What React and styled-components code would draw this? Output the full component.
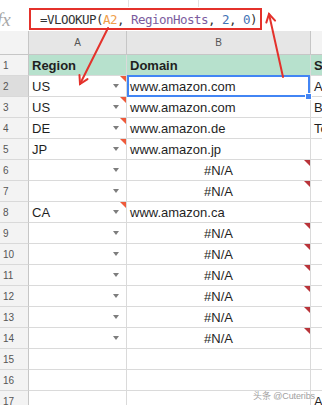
import React from "react";
import styled, { createGlobalStyle } from "styled-components";

const GlobalStyle = createGlobalStyle`
  html, body { margin: 0; padding: 0; background: #fff; overflow: hidden; }
  body { font-family: "Liberation Sans", Arial, sans-serif; }
`;

const COLS = "29px 98px 184px 1fr";
const RED = "#e4312b";

const Page = styled.div`
  position: relative;
  width: 322px;
  height: 405px;
  overflow: hidden;
  background: #fff;
`;

const TopStrip = styled.div`
  display: flex;
  height: 7px;
`;

const ToolbarSlot = styled.div`
  box-sizing: border-box;
  width: ${(p) => p.$w}px;
  height: 100%;
  border-right: 1px solid #e3e3e3;
`;

const FormulaBar = styled.div`
  display: flex;
  align-items: center;
  height: 24px;
  box-sizing: border-box;
`;

const FxLabel = styled.div`
  width: 29px;
  flex: none;
  margin-left: -3px;
  font-family: "Liberation Serif", serif;
  font-style: italic;
  font-size: 19px;
  color: #a8a8a8;
  line-height: 1;
`;

const FormulaBox = styled.div`
  box-sizing: border-box;
  width: 233px;
  height: 22px;
  margin-left: 3px;
  border: 2px solid ${RED};
  padding-left: 9px;
  display: flex;
  align-items: center;
  font-family: "DejaVu Sans Mono", "Liberation Mono", monospace;
  font-size: 12.5px;
  letter-spacing: -0.53px;
  color: #333;
  white-space: pre;
`;

const Tok = styled.span`
  color: ${(p) => p.$c};
`;

const HeaderRow = styled.div`
  display: grid;
  grid-template-columns: ${COLS};
  height: 24px;
`;

const ColHead = styled.div`
  box-sizing: border-box;
  background: ${(p) => p.$bg};
  border-right: ${(p) => (p.$last ? "none" : "1px solid #c6c6c6")};
  border-bottom: 1px solid #c6c6c6;
  display: flex;
  align-items: center;
  justify-content: center;
  font-size: 10px;
  color: #555;
`;

const Row = styled.div`
  display: grid;
  grid-template-columns: ${COLS};
  height: 21px;
`;

const RowHead = styled.div`
  box-sizing: border-box;
  background: ${(p) => (p.$sel ? "#dddddd" : "#f3f3f3")};
  border-right: 1px solid #c6c6c6;
  border-bottom: 1px solid #d9d9d9;
  padding-left: 3px;
  display: flex;
  align-items: center;
  font-size: 10px;
  color: #555;
`;

const Cell = styled.div`
  position: relative;
  box-sizing: border-box;
  background: ${(p) => (p.$head ? "#b7e1cd" : "#fff")};
  border-right: ${(p) => (p.$last ? "none" : "1px solid #dadada")};
  border-bottom: 1px solid #dadada;
  padding: 0 3px;
  display: flex;
  align-items: center;
  justify-content: ${(p) => p.$justify || "flex-start"};
  font-size: 13px;
  font-weight: ${(p) => (p.$head ? 700 : 400)};
  color: #1f1f1f;
  white-space: nowrap;
  overflow: ${(p) => (p.$active ? "visible" : "hidden")};

  ${(p) =>
    p.$active &&
    `
    z-index: 2;
    &::after {
      content: "";
      position: absolute;
      top: -1px;
      left: 0;
      right: 0;
      bottom: -1px;
      border: 2px solid #4285f4;
      pointer-events: none;
    }
  `}
`;

const Handle = styled.span`
  position: absolute;
  right: -2px;
  bottom: -4px;
  width: 5px;
  height: 5px;
  background: #4285f4;
  border: 1px solid #fff;
  z-index: 3;
`;

const DropArrow = styled.span`
  width: 0;
  height: 0;
  margin-right: 4px;
  border-left: 3.5px solid transparent;
  border-right: 3.5px solid transparent;
  border-top: 4px solid #7d7d7d;
`;

const Flag = styled.span`
  position: absolute;
  top: 0;
  right: 0;
  width: 0;
  height: 0;
  border-top: 6px solid ${(p) => p.$color};
  border-left: 6px solid transparent;
`;

const Overlay = styled.svg`
  position: absolute;
  left: 0;
  top: 0;
  pointer-events: none;
  z-index: 5;
`;

const Watermark = styled.div`
  position: absolute;
  left: 253px;
  top: 389px;
  font-family: "Liberation Sans", "Noto Sans CJK SC", sans-serif;
  font-size: 9px;
  letter-spacing: -0.1px;
  color: #8f8f8f;
  opacity: 0.85;
  text-shadow: 0 0 1px #fff;
  z-index: 6;
  white-space: nowrap;
`;

const rows = [
  { n: 1, a: "Region", b: "Domain", c: "S", head: true },
  { n: 2, a: "US", b: "www.amazon.com", c: "A", dd: true, aFlag: true, active: true },
  { n: 3, a: "US", b: "www.amazon.com", c: "B", dd: true, aFlag: true },
  { n: 4, a: "DE", b: "www.amazon.de", c: "To", dd: true, aFlag: true },
  { n: 5, a: "JP", b: "www.amazon.jp", dd: true, aFlag: true },
  { n: 6, a: "", b: "#N/A", dd: true, err: true },
  { n: 7, a: "", b: "#N/A", dd: true, err: true },
  { n: 8, a: "CA", b: "www.amazon.ca", dd: true, aFlag: true },
  { n: 9, a: "", b: "#N/A", dd: true, err: true },
  { n: 10, a: "", b: "#N/A", dd: true, err: true },
  { n: 11, a: "", b: "#N/A", dd: true, err: true },
  { n: 12, a: "", b: "#N/A", dd: true, err: true },
  { n: 13, a: "", b: "#N/A", dd: true, err: true },
  { n: 14, a: "", b: "#N/A", dd: true, err: true },
  { n: 15 },
  { n: 16 },
  { n: 17, c: "A" },
];

function Arrow({ x1, y1, x2, y2 }) {
  const dx = x1 - x2;
  const dy = y1 - y2;
  const len = Math.hypot(dx, dy);
  const ux = dx / len;
  const uy = dy / len;
  const L = 9;
  const c = Math.cos(Math.PI / 6);
  const s = Math.sin(Math.PI / 6);
  const w1 = [x2 + L * (ux * c - uy * s), y2 + L * (ux * s + uy * c)];
  const w2 = [x2 + L * (ux * c + uy * s), y2 + L * (-ux * s + uy * c)];
  return (
    <g stroke={RED} strokeWidth="2" strokeLinecap="round" fill="none">
      <line x1={x1} y1={y1} x2={x2} y2={y2} />
      <polyline points={`${w1[0]},${w1[1]} ${x2},${y2} ${w2[0]},${w2[1]}`} />
    </g>
  );
}

export default function App() {
  return (
    <Page>
      <GlobalStyle />
      <TopStrip>
        <ToolbarSlot $w={129} />
        <ToolbarSlot $w={70} />
      </TopStrip>
      <FormulaBar>
        <FxLabel>fx</FxLabel>
        <FormulaBox>
          <Tok $c="#333">=VLOOKUP(</Tok>
          <Tok $c="#f0a04b">A2</Tok>
          <Tok $c="#333">, </Tok>
          <Tok $c="#7b5c9e">RegionHosts</Tok>
          <Tok $c="#333">, </Tok>
          <Tok $c="#3f73b5">2</Tok>
          <Tok $c="#333">, </Tok>
          <Tok $c="#3f73b5">0</Tok>
          <Tok $c="#333">)</Tok>
        </FormulaBox>
      </FormulaBar>
      <HeaderRow>
        <ColHead $bg="#f3f3f3" />
        <ColHead $bg="#e6e6e6">A</ColHead>
        <ColHead $bg="#e6e6e6">B</ColHead>
        <ColHead $bg="#f3f3f3" $last />
      </HeaderRow>
      {rows.map((r) => (
        <Row key={r.n}>
          <RowHead $sel={r.active}>{r.n}</RowHead>
          <Cell $head={r.head} $justify={r.dd ? "space-between" : undefined}>
            <span>{r.a}</span>
            {r.dd && <DropArrow />}
            {r.aFlag && <Flag $color="#ee5a3b" />}
          </Cell>
          <Cell
            $head={r.head}
            $active={r.active}
            $justify={r.err ? "center" : undefined}
          >
            {r.b}
            {r.err && <Flag $color="#b9343a" />}
            {r.active && <Handle />}
          </Cell>
          <Cell $head={r.head} $last>
            {r.c}
          </Cell>
        </Row>
      ))}
      <Overlay width="322" height="405" viewBox="0 0 322 405">
        <Arrow x1={108} y1={28} x2={80} y2={84} />
        <Arrow x1={283} y1={77} x2={269} y2={14} />
      </Overlay>
      <Watermark>头条 @Cuteribs</Watermark>
    </Page>
  );
}
